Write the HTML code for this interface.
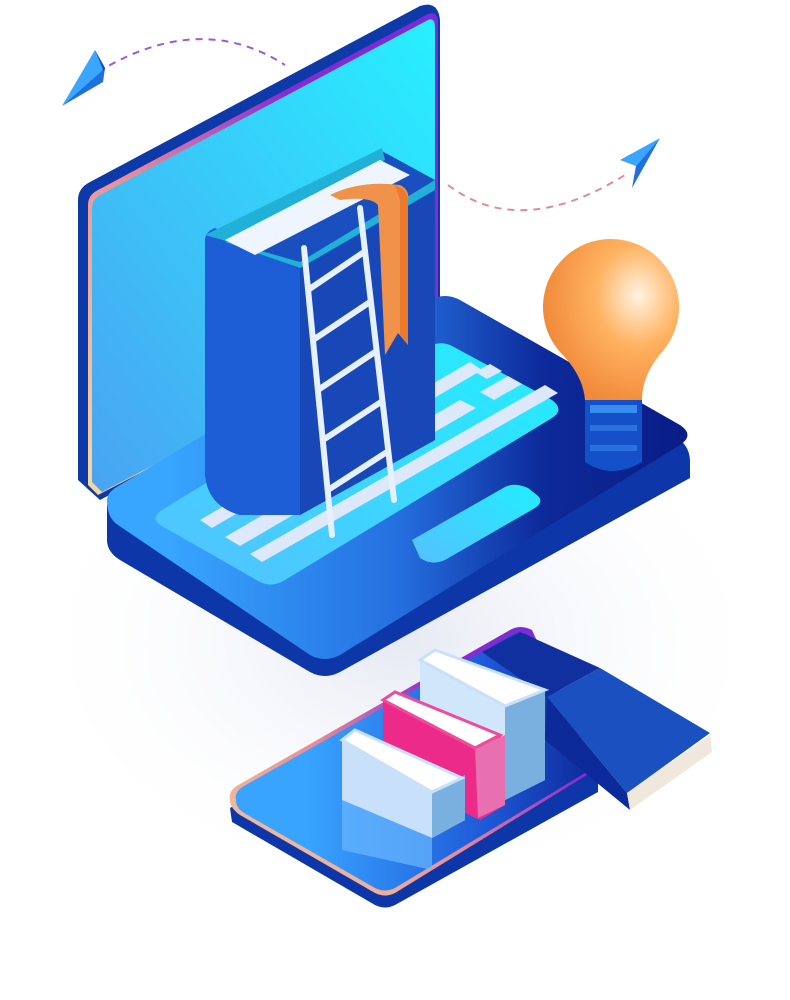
<!DOCTYPE html>
<html><head><meta charset="utf-8"><style>html,body{margin:0;padding:0;background:#fff}svg{display:block}</style></head>
<body>
<svg width="790" height="1000" viewBox="0 0 790 1000" xmlns="http://www.w3.org/2000/svg">
<defs>
<linearGradient id="scr" x1="0" y1="1" x2="1" y2="0"><stop offset="0" stop-color="#4aa3f2"/><stop offset="1" stop-color="#27f0ff"/></linearGradient>
<linearGradient id="base" x1="0" y1="0" x2="1" y2="0"><stop offset="0.1" stop-color="#38a6ff"/><stop offset="0.5" stop-color="#2570e0"/><stop offset="0.75" stop-color="#0d2a9a"/><stop offset="1" stop-color="#0a1c86"/></linearGradient>
<linearGradient id="kb" x1="0" y1="1" x2="1" y2="0"><stop offset="0" stop-color="#55c0ff"/><stop offset="1" stop-color="#22eeff"/></linearGradient>
<linearGradient id="edge" x1="0" y1="1" x2="1" y2="0"><stop offset="0" stop-color="#f9d99a"/><stop offset="0.4" stop-color="#e98a9a"/><stop offset="0.7" stop-color="#8a2ad0"/><stop offset="1" stop-color="#7a2ad8"/></linearGradient>
<radialGradient id="bulb" cx="0.7" cy="0.35" r="0.7"><stop offset="0" stop-color="#fff3e0"/><stop offset="0.45" stop-color="#ffb260"/><stop offset="1" stop-color="#f08a3a"/></radialGradient>
<linearGradient id="plate" x1="0" y1="0" x2="1" y2="0"><stop offset="0.2" stop-color="#38a4ff"/><stop offset="0.7" stop-color="#1f5ad8"/><stop offset="1" stop-color="#0d2a9a"/></linearGradient>
<radialGradient id="sh" cx="0.5" cy="0.5" r="0.5"><stop offset="0" stop-color="#e6e9f3"/><stop offset="1" stop-color="#fff" stop-opacity="0"/></radialGradient>
</defs>
<ellipse cx="400" cy="640" rx="380" ry="260" fill="url(#sh)"/>
<path d="M98 72 Q200 10 285 65" fill="none" stroke="#9a5ad8" stroke-width="2" stroke-dasharray="7 6"/>
<path d="M448 185 Q520 240 625 175" fill="none" stroke="#e08a9a" stroke-width="2" stroke-dasharray="7 6"/>
<polygon points="62,106 95,50 105,68" fill="#3aa6ff"/><polygon points="62,106 105,68 103,82" fill="#1e6fe0"/><polygon points="95,50 105,68 104,72" fill="#1448c0"/>
<polygon points="660,138 620,160 636,166" fill="#3aa6ff"/><polygon points="660,138 636,166 632,188" fill="#1e6fe0"/>
<path d="M78 200 Q78 188 90 182 L420 6 Q438 0 440 20 L440 320 L100 500 L78 480 Z" fill="#0d3aa8"/>
<path d="M88 205 Q88 195 98 190 L428 14 Q438 10 438 24 L438 318 L98 495 L88 485 Z" fill="url(#edge)"/>
<path d="M92 208 Q92 199 102 194 L428 20 Q435 17 435 28 L435 318 L102 492 L92 482 Z" fill="url(#scr)"/>
<path d="M107 505 L430 312 Q445 304 460 312 L680 440 Q690 448 690 462 L690 478 L340 672 Q325 680 310 672 L120 560 Q107 552 107 540 Z" fill="#0d36a8"/>
<path d="M107 500 Q107 492 120 485 L430 300 Q445 292 460 300 L680 425 Q695 435 680 445 L340 655 Q325 663 310 655 L118 525 Q107 518 107 500 Z" fill="url(#base)"/>
<path d="M160 525 Q150 518 162 510 L428 347 Q440 340 452 346 L552 400 Q565 410 552 418 L285 580 Q272 588 260 582 Z" fill="url(#kb)"/>
<g fill="#dde9fa">
<polygon points="200,520 470,362 482,370 212,528"/>
<polygon points="225,537 460,400 476,408 240,546"/>
<polygon points="480,392 508,376 522,384 494,400"/>
<polygon points="250,554 545,385 558,393 262,562"/>
<polygon points="475,372 490,364 502,371 487,379"/>
</g>
<path d="M412 540 L505 487 Q515 482 528 488 L538 496 Q544 502 535 508 L445 560 Q432 566 420 558 Z" fill="url(#kb)"/>
<path d="M205 240 L380 150 L435 180 L435 440 L300 515 L240 515 Q205 505 205 470 Z" fill="#1a4fc0"/>
<path d="M205 240 Q205 232 215 228 L300 270 L300 515 L240 515 Q205 505 205 470 Z" fill="#1d5dd6"/>
<path d="M300 270 L435 190 L435 440 L300 515 Z" fill="#1848b8"/>
<path d="M205 235 L382 148 L385 160 L225 242 L300 268 L435 190 L435 180 L300 262 Z" fill="#20b0d8"/>
<polygon points="225,240 380,160 410,175 255,255" fill="#eef5ff"/>
<path d="M330 195 Q360 180 400 185 Q410 190 408 200 L408 345 L398 333 L385 355 L378 205 Q370 196 340 200 Z" fill="#f0924a"/>
<path d="M395 185 Q408 190 408 200 L408 345 L400 335 L400 200 Z" fill="#ec7a2a"/>
<g stroke="#e6f0ff" stroke-width="6" stroke-linecap="round">
<line x1="304" y1="248" x2="332" y2="535"/><line x1="360" y1="208" x2="394" y2="500"/>
<line x1="308" y1="290" x2="364" y2="252"/><line x1="313" y1="340" x2="370" y2="302"/>
<line x1="318" y1="390" x2="375" y2="352"/><line x1="323" y1="440" x2="381" y2="402"/>
<line x1="328" y1="490" x2="387" y2="452"/>
</g>
<path d="M585 395 L642 395 L642 462 Q612 480 585 462 Z" fill="#1450c8"/>
<rect x="590" y="405" width="47" height="8" fill="#3a8cf0"/><rect x="590" y="425" width="47" height="6" fill="#2a70e0"/><rect x="590" y="445" width="47" height="6" fill="#2a70e0"/>
<path d="M560 352 A68 68 0 1 1 662 352 Q642 375 642 400 L585 400 Q583 375 560 352 Z" fill="url(#bulb)"/>
<path d="M230 808 L510 640 Q520 632 532 638 L598 780 L598 792 L395 905 Q385 910 375 905 L232 822 Z" fill="#0d36a8"/>
<path d="M230 800 Q228 790 240 784 L510 630 Q520 624 532 630 L595 770 L395 893 Q385 898 375 893 L240 815 Q230 808 230 800 Z" fill="url(#edge)"/>
<path d="M236 800 Q234 792 244 786 L510 636 Q520 630 530 636 L590 770 L395 888 Q385 893 375 888 L244 813 Q236 808 236 800 Z" fill="url(#plate)"/>
<polygon points="482,652 520,632 600,668 547,697" fill="#1030a0"/>
<polygon points="547,697 600,668 710,733 627,793" fill="#1a50c0"/>
<polygon points="547,697 627,793 630,810 545,740" fill="#0d2a9a"/>
<polygon points="627,793 710,735 712,752 630,810" fill="#f0e8dc"/>
<polygon points="420,660 435,650 545,695 545,780 505,800 420,760" fill="#d0e6fb"/>
<polygon points="505,705 545,688 545,780 505,800" fill="#7ab0e0"/>
<polygon points="420,660 435,650 545,690 505,706" fill="#ffffff" stroke="#c8e0f8" stroke-width="3"/>
<polygon points="383,700 395,692 505,738 505,805 480,820 383,775" fill="#ec2a8a"/>
<polygon points="475,748 505,735 505,805 478,818" fill="#e870b0"/>
<polygon points="383,700 395,692 500,735 475,748" fill="#ffffff" stroke="#f04a9a" stroke-width="3"/>
<polygon points="342,740 355,730 465,780 465,820 432,838 342,800" fill="#c8e0fa"/>
<polygon points="432,790 465,775 465,820 432,838" fill="#7ab0e0"/>
<polygon points="342,740 355,730 462,778 432,792" fill="#ffffff" stroke="#c8e0f8" stroke-width="3"/>
<polygon points="342,800 432,838 432,870 342,850" fill="#6ab8ff" opacity="0.7"/>
</svg>
</body></html>
